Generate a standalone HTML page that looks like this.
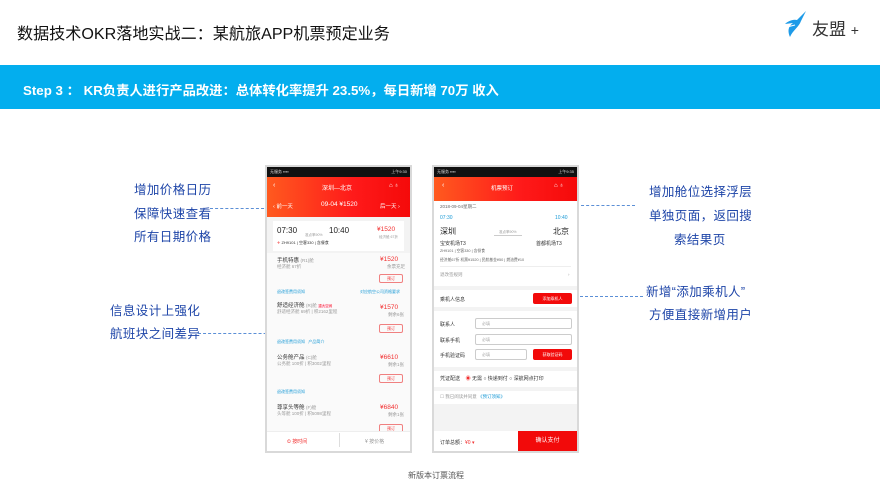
<!DOCTYPE html>
<html><head><meta charset="utf-8"><style>
*{margin:0;padding:0;box-sizing:border-box}
body{width:880px;height:493px;background:#fff;position:relative;overflow:hidden;font-family:"Liberation Sans","Noto Sans CJK SC",sans-serif}
.a{position:absolute;white-space:nowrap}
.lab{position:absolute;color:#1e45a8;font-size:12.5px;letter-spacing:0.4px;white-space:nowrap}
.dash{position:absolute;border-top:1px dashed #5b8fd6;height:0}
.ph{position:absolute;background:#f3f3f3;border:2px solid #d9d9d9;overflow:hidden}
.s{font-size:4.5px;color:#999}
.r{color:#f23030}
.bl{color:#1a9ad6}
.btn{position:absolute;border:1px solid #f08080;border-radius:2px;font-size:4px;color:#f23030;text-align:center;line-height:8px;width:24px;height:9px}
.in{position:absolute;border:1px solid #ccc;border-radius:2px;background:#fff;font-size:4px;color:#aaa;padding-left:6px;line-height:10px;height:11px}
.rb{position:absolute;background:#f20a0a;color:#fff;font-size:4px;text-align:center;border-radius:2px;line-height:11px;height:11px}
</style></head><body>
<div class="a" style="left:17px;top:20px;font-size:16.1px;color:#111">数据技术OKR落地实战二：某航旅APP机票预定业务</div>
<svg class="a" style="left:783px;top:10px" width="26" height="28" viewBox="0 0 26 28"><path d="M23 1 L14 10 C10 9 5 11 2 14 L10 13 C6 16 4 20 7 27 C10 20 16 17 18 11 Z" fill="#1e9be8"/><path d="M4 17 L12 15" stroke="#fff" stroke-width="1"/></svg>
<div class="a" style="left:812px;top:15px;font-size:17px;color:#333">友盟 <span style="font-size:14px">+</span></div>
<div class="a" style="left:0;top:65px;width:880px;height:44px;background:#03aeee"></div>
<div class="a" style="left:23px;top:80px;font-size:13.3px;color:#fff;font-weight:bold">Step 3 ： KR负责人进行产品改进：总体转化率提升 23.5%，每日新增 70万 收入</div>

<div class="lab" style="left:134px;top:179px">增加价格日历</div>
<div class="lab" style="left:134px;top:203px">保障快速查看</div>
<div class="lab" style="left:134px;top:226px">所有日期价格</div>
<div class="dash" style="left:210px;top:208px;width:100px"></div>
<div class="lab" style="left:110px;top:300px">信息设计上强化</div>
<div class="lab" style="left:110px;top:323px">航班块之间差异</div>
<div class="dash" style="left:198px;top:333px;width:114px"></div>
<div class="lab" style="left:649px;top:181px">增加舱位选择浮层</div>
<div class="lab" style="left:649px;top:205px">单独页面，返回搜</div>
<div class="lab" style="left:674px;top:229px">索结果页</div>
<div class="dash" style="left:525px;top:205px;width:110px"></div>
<div class="lab" style="left:646px;top:281px">新增“添加乘机人”</div>
<div class="lab" style="left:649px;top:304px">方便直接新增用户</div>
<div class="dash" style="left:575px;top:296px;width:68px"></div>

<!-- phone 1 -->
<div class="ph" style="left:265px;top:165px;width:147px;height:288px">
 <div class="a" style="left:0;top:0;width:143px;height:10px;background:#111;font-size:4px;color:#ddd;padding:2px 3px">无服务 ▪▪▪▪<span style="float:right">上午9:30</span></div>
 <div class="a" style="left:0;top:10px;width:143px;height:40px;background:linear-gradient(90deg,#ff5a1f,#ff1a1a 60%,#f50a0a)"></div>
 <div class="a" style="left:6px;top:15px;font-size:7px;color:#fff">‹</div>
 <div class="a" style="left:55px;top:16px;font-size:6px;color:#fff">深圳—北京</div>
 <div class="a" style="left:122px;top:16px;font-size:6px;color:#fff">⌂ ♁</div>
 <div class="a" style="left:6px;top:35px;font-size:5.5px;color:#fff">‹ 前一天</div>
 <div class="a" style="left:54px;top:34px;font-size:6.5px;color:#fff">09-04 ¥1520</div>
 <div class="a" style="left:113px;top:35px;font-size:5.5px;color:#fff">后一天 ›</div>
 <div class="a" style="left:6px;top:54px;width:131px;height:30px;background:#fff"></div>
 <div class="a" style="left:10px;top:59px;font-size:8px;color:#222">07:30</div>
 <div class="a" style="left:38px;top:56px" ><span class="s" style="font-size:3.5px">准点率90%</span></div>
 <div class="a" style="left:62px;top:59px;font-size:8px;color:#222">10:40</div>
 <div class="a r" style="left:110px;top:59px;font-size:6.5px">¥1520</div>
 <div class="a s" style="left:112px;top:68px;font-size:3.5px">经济舱 67折</div>
 <div class="a" style="left:10px;top:73px;font-size:4px;color:#333"><span class="r">✈</span> ZH9101 | 空客330 | 含餐食</div>
 <div class="a" style="left:0;top:86px;width:143px;height:203px;background:#fafafa"></div>
 <div class="a" style="left:10px;top:89px;font-size:5.5px;color:#333">手机特惠 <span class="s">(R1)舱</span></div>
 <div class="a s" style="left:10px;top:97px">经济舱 67折</div>
 <div class="a r" style="left:113px;top:89px;font-size:6.5px">¥1520</div>
 <div class="a s" style="left:120px;top:97px">余票充足</div>
 <div class="btn" style="left:112px;top:107px">预订</div>
 <div class="a bl" style="left:10px;top:122px;font-size:4px">退改签费用须知</div>
 <div class="a bl" style="left:93px;top:122px;font-size:4px">对应航空公司资格要求</div>
 <div class="a" style="left:10px;top:134px;font-size:5.5px;color:#333">舒适经济舱 <span class="s">(R)舱</span> <span style="font-size:3.5px;color:#f23030;background:#fde">重大空间</span></div>
 <div class="a s" style="left:10px;top:142px">舒适经济舱 69折 | 积2162里程</div>
 <div class="a r" style="left:113px;top:137px;font-size:6.5px">¥1570</div>
 <div class="a s" style="left:121px;top:145px">剩余6张</div>
 <div class="btn" style="left:112px;top:157px">预订</div>
 <div class="a bl" style="left:10px;top:172px;font-size:4px">退改签费用须知 &nbsp; 产品简介</div>
 <div class="a" style="left:10px;top:186px;font-size:5.5px;color:#333">公务舱产品 <span class="s">(C)舱</span></div>
 <div class="a s" style="left:10px;top:194px">公务舱 100折 | 积3002里程</div>
 <div class="a r" style="left:113px;top:187px;font-size:6.5px">¥6610</div>
 <div class="a s" style="left:121px;top:195px">剩余1张</div>
 <div class="btn" style="left:112px;top:207px">预订</div>
 <div class="a bl" style="left:10px;top:222px;font-size:4px">退改签费用须知</div>
 <div class="a" style="left:10px;top:236px;font-size:5.5px;color:#333">尊享头等舱 <span class="s">(F)舱</span></div>
 <div class="a s" style="left:10px;top:244px">头等舱 100折 | 积5098里程</div>
 <div class="a r" style="left:113px;top:237px;font-size:6.5px">¥6840</div>
 <div class="a s" style="left:121px;top:245px">剩余1张</div>
 <div class="btn" style="left:112px;top:257px">预订</div>
 <div class="a" style="left:0;top:264px;width:143px;height:20px;background:#fff;border-top:1px solid #eee"></div>
 <div class="a r" style="left:20px;top:271px;font-size:5px">⏲ 按时间</div>
 <div class="a" style="left:72px;top:266px;width:1px;height:14px;background:#ddd"></div>
 <div class="a s" style="left:98px;top:271px;font-size:5px">¥ 按价格</div>
</div>

<!-- phone 2 -->
<div class="ph" style="left:432px;top:165px;width:147px;height:288px">
 <div class="a" style="left:0;top:0;width:143px;height:10px;background:#111;font-size:4px;color:#ddd;padding:2px 3px">无服务 ▪▪▪▪<span style="float:right">上午9:35</span></div>
 <div class="a" style="left:0;top:10px;width:143px;height:24px;background:linear-gradient(90deg,#ff5a1f,#ff1a1a 60%,#f50a0a)"></div>
 <div class="a" style="left:8px;top:15px;font-size:7px;color:#fff">‹</div>
 <div class="a" style="left:57px;top:17px;font-size:5.5px;color:#fff">机票预订</div>
 <div class="a" style="left:120px;top:16px;font-size:6px;color:#fff">⌂ ♁</div>
 <div class="a" style="left:0;top:34px;width:143px;height:85px;background:#fff"></div>
 <div class="a s" style="left:6px;top:37px;color:#666">2018-09-04星期二</div>
 <div class="a bl" style="left:6px;top:48px;font-size:5px">07:30</div>
 <div class="a bl" style="left:121px;top:48px;font-size:5px">10:40</div>
 <div class="a" style="left:6px;top:59px;font-size:8px;color:#222">深圳</div>
 <div class="a s" style="left:60px;top:63px;font-size:3.5px;border-bottom:1px solid #ccc;padding:0 5px">准点率90%</div>
 <div class="a" style="left:119px;top:59px;font-size:8px;color:#222">北京</div>
 <div class="a" style="left:6px;top:73px;font-size:5px;color:#333">宝安机场T3</div>
 <div class="a" style="left:102px;top:73px;font-size:5px;color:#333">首都机场T3</div>
 <div class="a s" style="left:6px;top:82px;font-size:3.8px;color:#666">ZH9101 | 空客330 | 含餐食</div>
 <div class="a s" style="left:6px;top:91px;font-size:3.8px;color:#666">经济舱67折 机票¥1520 | 民航基金¥50 | 燃油费¥10</div>
 <div class="a" style="left:6px;top:99px;width:131px;height:1px;background:#eee"></div>
 <div class="a s" style="left:6px;top:105px">退改签规则<span style="position:absolute;left:128px">›</span></div>
 <div class="a" style="left:0;top:123px;width:143px;height:17px;background:#fff"></div>
 <div class="a" style="left:6px;top:129px;font-size:5px;color:#333">乘机人信息</div>
 <div class="rb" style="left:99px;top:126px;width:39px">添加乘机人</div>
 <div class="a" style="left:0;top:144px;width:143px;height:56px;background:#fff"></div>
 <div class="a" style="left:6px;top:154px;font-size:5px;color:#333">联系人</div>
 <div class="in" style="left:41px;top:151px;width:97px">必填</div>
 <div class="a" style="left:6px;top:170px;font-size:5px;color:#333">联系手机</div>
 <div class="in" style="left:41px;top:167px;width:97px">必填</div>
 <div class="a" style="left:6px;top:185px;font-size:5px;color:#333">手机验证码</div>
 <div class="in" style="left:41px;top:182px;width:52px">必填</div>
 <div class="rb" style="left:99px;top:182px;width:39px">获取验证码</div>
 <div class="a" style="left:0;top:204px;width:143px;height:16px;background:#fff"></div>
 <div class="a" style="left:6px;top:208px;font-size:5px;color:#333">凭证配送 &nbsp;&nbsp;&nbsp;<span class="r">◉</span> 无需 ○ 快递到付 ○ 深航网点打印</div>
 <div class="a" style="left:0;top:224px;width:143px;height:13px;background:#fff"></div>
 <div class="a s" style="left:6px;top:227px">☐ 我已阅读并同意 <span class="bl">《预订须知》</span></div>
 <div class="a" style="left:0;top:264px;width:143px;height:21px;background:#fff"></div>
 <div class="a" style="left:6px;top:272px;font-size:5px;color:#333">订单总额：<span class="r">¥0 ▾</span></div>
 <div class="a" style="left:84px;top:264px;width:59px;height:21px;background:#f20a0a;color:#fff;font-size:6px;text-align:center;line-height:21px">确认支付</div>
</div>

<div class="a" style="left:408px;top:470px;font-size:8px;color:#555">新版本订票流程</div>
</body></html>
